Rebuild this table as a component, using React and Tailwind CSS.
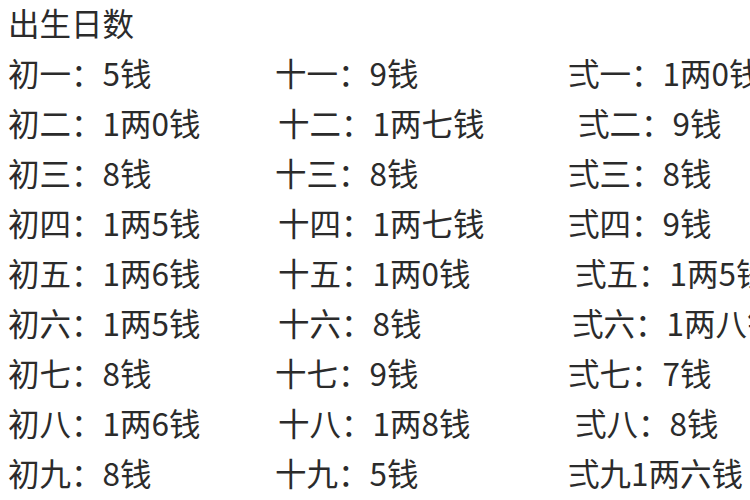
// 出生日数 table: three columns, per-cell nudges as in the source image
const rows = [
  [['初一：5钱', ''], ['十一：9钱', ''], ['弍一：1两0钱', '']],
  [['初二：1两0钱', ''], ['十二：1两七钱', 'pl-[3px]'], ['弍二：9钱', 'pl-[10px]']],
  [['初三：8钱', ''], ['十三：8钱', ''], ['弍三：8钱', '']],
  [['初四：1两5钱', ''], ['十四：1两七钱', 'pl-[3px]'], ['弍四：9钱', '']],
  [['初五：1两6钱', ''], ['十五：1两0钱', 'pl-[3px]'], ['弍五：1两5钱', 'pl-[7px]']],
  [['初六：1两5钱', ''], ['十六：8钱', 'pl-[3px]'], ['弍六：1两八钱', 'pl-[4px]']],
  [['初七：8钱', ''], ['十七：9钱', ''], ['弍七：7钱', '']],
  [['初八：1两6钱', ''], ['十八：1两8钱', 'pl-[3px]'], ['弍八：8钱', 'pl-[7px]']],
  [['初九：8钱', ''], ['十九：5钱', ''], ['弍九1两六钱', '']],
];

export default function App() {
  return (
    <div className="w-[750px] h-[500px] overflow-hidden bg-white text-[#2b2b2b] text-[31.5px] leading-[50px] font-['Microsoft_YaHei','Noto_Sans_CJK_SC',sans-serif]">
      <div className="-mt-[3px] pl-2">
        <div>出生日数</div>
        {rows.map((row, i) => (
          <div key={i} className="grid grid-cols-[267px_293px_1fr] whitespace-nowrap">
            {row.map(([text, pad], j) => (
              <div key={j} className={pad}>
                {text}
              </div>
            ))}
          </div>
        ))}
      </div>
    </div>
  );
}
